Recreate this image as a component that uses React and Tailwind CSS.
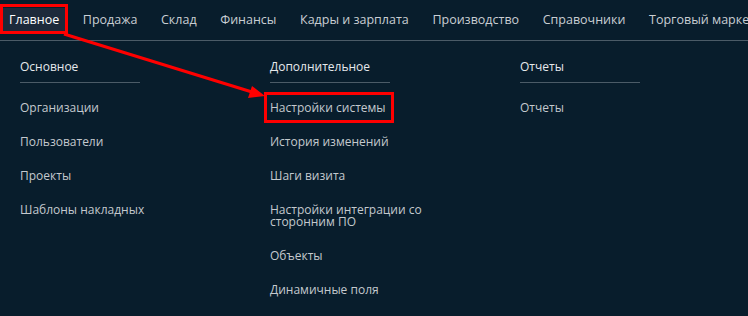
const navItems = [
  'Главное',
  'Продажа',
  'Склад',
  'Финансы',
  'Кадры и зарплата',
  'Производство',
  'Справочники',
  'Торговый маркетинг',
]

const columns = [
  {
    title: 'Основное',
    items: ['Организации', 'Пользователи', 'Проекты', 'Шаблоны накладных'],
  },
  {
    title: 'Дополнительное',
    items: [
      'Настройки системы',
      'История изменений',
      'Шаги визита',
      'Настройки интеграции со сторонним ПО',
      'Объекты',
      'Динамичные поля',
    ],
  },
  {
    title: 'Отчеты',
    items: ['Отчеты'],
  },
]

function Annotations() {
  return (
    <svg className="absolute inset-0 pointer-events-none" width="748" height="316">
      <rect x="1.5" y="5.5" width="65" height="27" fill="none" stroke="#ff0000" strokeWidth="3" />
      <rect x="265.5" y="93.5" width="127" height="28" fill="none" stroke="#ff0000" strokeWidth="3" />
      <line x1="64" y1="34" x2="252" y2="92" stroke="#ff0000" strokeWidth="3" />
      <polygon points="265,96 248,98 252,86" fill="#ff0000" />
    </svg>
  )
}

export default function App() {
  return (
    <div
      className="relative w-[748px] h-[316px] overflow-hidden bg-[#081d2c] text-[12px]"
      style={{ fontFamily: '"Open Sans", "Liberation Sans", sans-serif' }}
    >
      <nav className="flex items-center h-[41px] border-b border-[#4b5b67] pl-[3px] gap-[11.6px] whitespace-nowrap text-[12.5px]">
        {navItems.map((item, i) => (
          <div
            key={item}
            className={
              i === 0
                ? 'px-[6px] h-[24px] flex items-center bg-[#1d2a3b] text-white'
                : 'px-[6px] h-[24px] flex items-center text-[#c9ced3]'
            }
          >
            {item}
          </div>
        ))}
      </nav>

      <div className="flex pt-[17px] pl-[20px]">
        {columns.map((col) => (
          <div key={col.title} className="w-[250px] shrink-0 flex flex-col">
            <div className="text-[#e6e9ec] leading-[18px]">{col.title}</div>
            <div className="w-[120px] h-px bg-[#4b5b67] mt-[6px] mb-[19px]" />
            <div className="flex flex-col gap-[22px] w-[180px]">
              {col.items.map((item) => (
                <div key={item} className="text-[#c4c9ce] leading-[12px]">
                  {item}
                </div>
              ))}
            </div>
          </div>
        ))}
      </div>

      <Annotations />
    </div>
  )
}
